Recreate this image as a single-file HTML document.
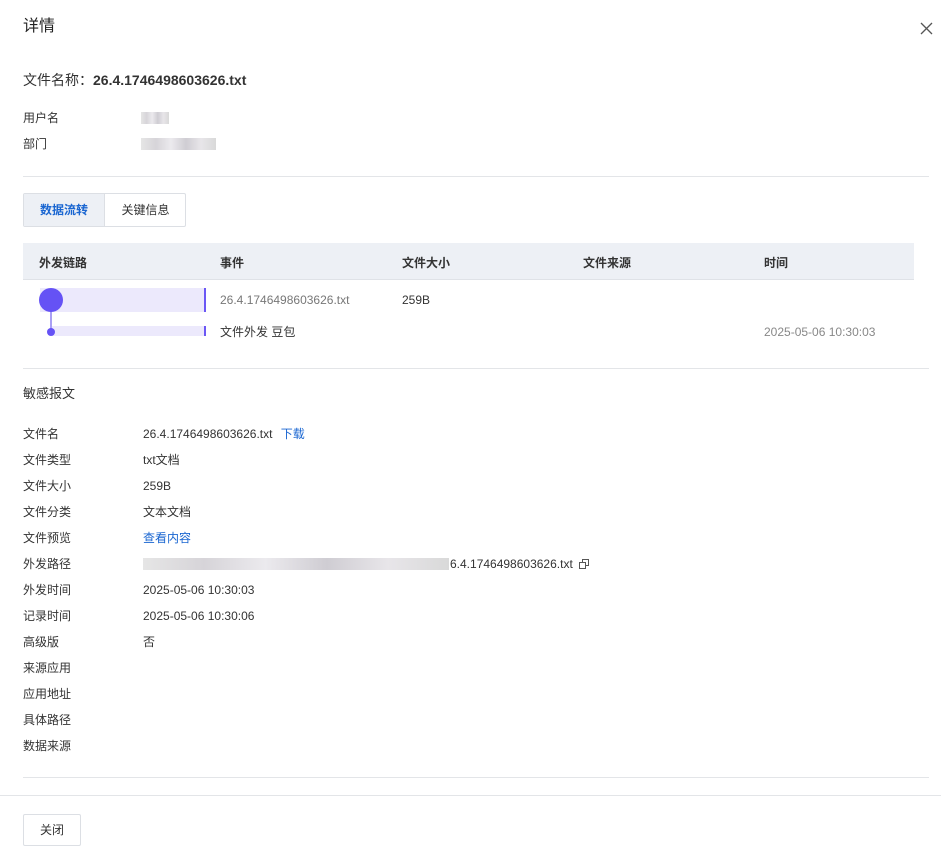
<!DOCTYPE html>
<html><head><meta charset="utf-8"><style>
*{margin:0;padding:0;box-sizing:border-box}
body{width:941px;height:854px;background:#fff;position:relative;overflow:hidden;font-family:"Liberation Sans","Noto Sans CJK SC",sans-serif;font-size:12px;color:#333}
.a{position:absolute;white-space:nowrap;line-height:16px}
.hr{position:absolute;height:1px;background:#e3e5e8}
.blur{position:absolute;background:linear-gradient(90deg,#ddd,#c9c6cc,#e5e3e8,#bfbcc4,#e0dde2,#ccc);opacity:.75}
.lbl{left:23px}
.val{left:143px}
.th{position:absolute;top:254px;font-weight:bold;color:#333}
</style></head><body>
<div class="a" style="left:23px;top:17px;font-size:16px;line-height:20px;color:#222">详情</div>
<svg style="position:absolute;left:920px;top:22px" width="13" height="13"><path d="M1 1L12 12M12 1L1 12" stroke="#555" stroke-width="1.3"/></svg>
<div class="a" style="left:23px;top:71px;font-size:14px;line-height:18px;color:#333">文件名称：<b>26.4.1746498603626.txt</b></div>
<div class="a lbl" style="top:110px">用户名</div>
<div class="blur" style="left:141px;top:112px;width:28px;height:12px"></div>
<div class="a lbl" style="top:136px">部门</div>
<div class="blur" style="left:141px;top:138px;width:75px;height:12px"></div>
<div class="hr" style="left:23px;top:176px;width:906px"></div>
<div style="position:absolute;left:23px;top:193px;width:163px;height:34px;border:1px solid #dcdfe4;border-radius:2px;overflow:hidden">
<div style="position:absolute;left:0;top:0;width:81px;height:32px;background:#edf0f5;border-right:1px solid #dcdfe4;color:#1a66d1;font-weight:bold;text-align:center;line-height:32px">数据流转</div>
<div style="position:absolute;left:81px;top:0;width:81px;height:32px;text-align:center;line-height:32px;color:#333">关键信息</div></div>
<div style="position:absolute;left:23px;top:243px;width:891px;height:37px;background:#edf0f5;border-bottom:1px solid #dfe2e7"></div>
<div class="th" style="left:39px">外发链路</div>
<div class="th" style="left:220px">事件</div>
<div class="th" style="left:402px">文件大小</div>
<div class="th" style="left:583px">文件来源</div>
<div class="th" style="left:764px">时间</div>
<div style="position:absolute;left:40px;top:288px;width:166px;height:24px;background:#ece9fc;border-right:2px solid #6b57f5"></div>
<div style="position:absolute;left:50px;top:300px;width:2px;height:32px;background:#a99ff5"></div>
<div style="position:absolute;left:39px;top:288px;width:24px;height:24px;border-radius:50%;background:#6552f5"></div>
<div style="position:absolute;left:52px;top:326px;width:154px;height:10px;background:#ece9fc;border-right:2px solid #6b57f5"></div>
<div style="position:absolute;left:47px;top:328px;width:8px;height:8px;border-radius:50%;background:#6552f5"></div>
<div class="a" style="left:220px;top:292px;color:#777">26.4.1746498603626.txt</div>
<div class="a" style="left:402px;top:292px">259B</div>
<div class="a" style="left:220px;top:324px">文件外发 豆包</div>
<div class="a" style="left:764px;top:324px;color:#888">2025-05-06 10:30:03</div>
<div class="hr" style="left:23px;top:368px;width:906px"></div>
<div class="a" style="left:23px;top:386px;font-size:13px">敏感报文</div>
<div class="a lbl" style="top:426px">文件名</div><div class="a val" style="top:426px">26.4.1746498603626.txt <span style="color:#1a66d1;margin-left:5px">下载</span></div>
<div class="a lbl" style="top:452px">文件类型</div><div class="a val" style="top:452px">txt文档</div>
<div class="a lbl" style="top:478px">文件大小</div><div class="a val" style="top:478px">259B</div>
<div class="a lbl" style="top:504px">文件分类</div><div class="a val" style="top:504px">文本文档</div>
<div class="a lbl" style="top:530px">文件预览</div><div class="a val" style="top:530px;color:#1a66d1">查看内容</div>
<div class="a lbl" style="top:556px">外发路径</div>
<div class="blur" style="left:143px;top:558px;width:306px;height:12px"></div>
<div class="a" style="left:450px;top:556px">6.4.1746498603626.txt</div>
<svg style="position:absolute;left:579px;top:559px" width="10" height="10"><rect x="0.5" y="3.5" width="6" height="6" fill="none" stroke="#555"/><path d="M3.5 3V0.5H9.5V6.5H7" fill="none" stroke="#555"/></svg>
<div class="a lbl" style="top:582px">外发时间</div><div class="a val" style="top:582px">2025-05-06 10:30:03</div>
<div class="a lbl" style="top:608px">记录时间</div><div class="a val" style="top:608px">2025-05-06 10:30:06</div>
<div class="a lbl" style="top:634px">高级版</div><div class="a val" style="top:634px">否</div>
<div class="a lbl" style="top:660px">来源应用</div>
<div class="a lbl" style="top:686px">应用地址</div>
<div class="a lbl" style="top:712px">具体路径</div>
<div class="a lbl" style="top:738px">数据来源</div>
<div class="hr" style="left:23px;top:777px;width:906px"></div>
<div class="hr" style="left:0;top:795px;width:941px"></div>
<div style="position:absolute;left:23px;top:814px;width:58px;height:32px;border:1px solid #dcdfe4;border-radius:2px;text-align:center;line-height:30px">关闭</div>
</body></html>
